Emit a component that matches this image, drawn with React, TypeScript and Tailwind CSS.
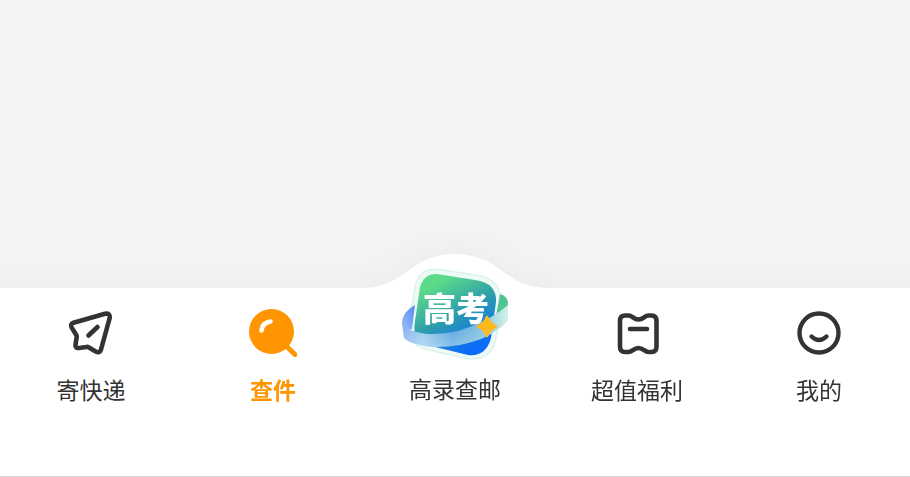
import type { ReactNode } from 'react'

function SendIcon() {
  return (
    <svg viewBox="0 0 48 48" className="size-12" fill="none" stroke="currentColor" strokeWidth="4.6" strokeLinecap="round" strokeLinejoin="round">
      <path d="M6.500 13.800 38 4.800Q43.500 3.800 42.700 9L34 40.500Q32.700 44.500 28.700 42.500L21.500 38.300Q20.500 37.700 19.400 38L12 39Q8 39.500 8.500 35.600L9.700 28.200Q9.900 27 9.300 26L4.700 18.600Q3 15 6.500 13.800Z" />
      <path d="M21.500 26.500 30.500 18" />
    </svg>
  )
}

function SearchIcon() {
  return (
    <svg viewBox="0 0 48 48" className="size-12" fill="none" strokeLinecap="round">
      <path d="M36 36 46 45.500" stroke="currentColor" strokeWidth="5" />
      <circle cx="22.500" cy="22.500" r="22.500" fill="currentColor" />
      <path d="M12.500 21.500Q13.500 13.500 21.500 12.500" stroke="#fff" strokeWidth="4.600" />
    </svg>
  )
}

function TicketIcon() {
  return (
    <svg viewBox="0 0 48 48" className="size-12" fill="none" stroke="currentColor" strokeWidth="4.6" strokeLinecap="round" strokeLinejoin="round">
      <path d="M12 6.500H15.500C19.500 6.500 20.500 10.500 25.500 10.500S31.500 6.500 35.500 6.500H38.500Q43.500 6.500 43.500 12V37.500Q43.500 43 38.500 43H35.500C31.500 43 30.500 39 25.500 39S19.500 43 15.500 43H12Q7 43 7 37.500V12Q7 6.500 12 6.500Z" />
      <path d="M17 20H34" />
    </svg>
  )
}

function SmileIcon() {
  return (
    <svg viewBox="0 0 48 48" className="size-12" fill="none" stroke="currentColor" strokeWidth="4.4" strokeLinecap="round">
      <circle cx="24" cy="24" r="19.500" />
      <path d="M16.500 27.500Q24 34.500 31.500 27.500" />
    </svg>
  )
}

function GaokaoLogo() {
  return (
    <svg viewBox="0 0 112 104" className="h-[104px] w-28" aria-hidden="true">
      <defs>
        <linearGradient id="tile" x1="0.200" y1="0" x2="0.750" y2="1">
          <stop offset="0.120" stopColor="#5cda89" />
          <stop offset="0.500" stopColor="#2d9eab" />
          <stop offset="0.920" stopColor="#0a6cf9" />
        </linearGradient>
        <linearGradient id="band" x1="0" y1="0" x2="1" y2="0">
          <stop offset="0" stopColor="#86b2ef" />
          <stop offset="0.200" stopColor="#9cccf1" />
          <stop offset="0.480" stopColor="#5fa8e0" />
          <stop offset="0.750" stopColor="#84c3e0" />
          <stop offset="1" stopColor="#d5f2e6" />
        </linearGradient>
        <linearGradient id="bandLight" x1="0" y1="0" x2="0" y2="1">
          <stop offset="0.500" stopColor="#fff" stopOpacity="0" />
          <stop offset="1" stopColor="#fff" stopOpacity="0.250" />
        </linearGradient>
        <linearGradient id="bandLeft" x1="0" y1="1" x2="1" y2="0">
          <stop offset="0" stopColor="#9dbff8" />
          <stop offset="1" stopColor="#5388ef" />
        </linearGradient>
      </defs>
      <path
        d="M21 26Q25 13 38 14L78 20Q98 24 97 42L92 80Q87 96 69 94L28 85Q13 80 15 65Z"
        fill="#e7f9f3"
        stroke="#daf4eb"
        strokeWidth="11"
        strokeLinejoin="round"
      />
      <path
        d="M21 26Q25 13 38 14L78 20Q98 24 97 42L92 80Q87 96 69 94L28 85Q13 80 15 65Z"
        fill="none"
        stroke="#edfaf6"
        strokeWidth="8"
      />
      <path d="M16 45Q2 53 3 65L10 70 13 69Z" fill="url(#bandLeft)" />
      <path d="M101 34Q108 36 109 42 110 49 97 56Z" fill="#4fc493" />
      <path d="M21 27Q25 13.500 38 14L76 20Q98 23 97 42L92 78Q87 97 69 95L28 85Q14 80 15.500 65Z" fill="url(#tile)" />
      <path d="M3 63Q8 72 29 74 52 75 73 66 94 58 109 45V61Q98 72 82 79 57 88 35 87 12 85 5 78Z" fill="url(#band)" />
      <path d="M3 63Q8 72 29 74 52 75 73 66 94 58 109 45V61Q98 72 82 79 57 88 35 87 12 85 5 78Z" fill="url(#bandLight)" />
      <text x="57" y="61" textAnchor="middle" fill="#fff" className="font-['Noto_Sans_CJK_SC',sans-serif] text-[33px] font-black">
        高考
      </text>
      <path d="M88 57Q90.500 64 97 66.500 90.500 69 88 76 85.500 69 79 66.500 85.500 64 88 57Z" fill="#ffb91c" stroke="#ffb91c" strokeWidth="2.500" strokeLinejoin="round" />
    </svg>
  )
}

type TabProps = {
  label: string
  icon: ReactNode
  active?: boolean
}

function Tab({ label, icon, active }: TabProps) {
  return (
    <button
      type="button"
      aria-current={active ? 'page' : undefined}
      className={
        active
          ? 'flex flex-1 flex-col items-center gap-3.5 font-bold text-[#ff9500]'
          : 'flex flex-1 flex-col items-center gap-3.5'
      }
    >
      {icon}
      <span>{label}</span>
    </button>
  )
}

export default function App() {
  return (
    <div className="flex min-h-screen flex-col bg-[#f2f3f5] font-['Noto_Sans_CJK_SC',sans-serif] text-[23px] leading-9 text-[#333]">
      <main className="flex-1" />
      <nav className="relative border-b border-[#d4d4d4] bg-white pt-[21px] pb-[69px] drop-shadow-[0_0_14px_rgba(0,0,0,0.04)]">
        {/* raised part of the bar behind the middle tab */}
        <svg
          viewBox="0 0 190 36"
          className="absolute -top-[34px] left-1/2 h-9 w-[190px] -translate-x-1/2 text-white"
          fill="currentColor"
          aria-hidden="true"
        >
          <path d="M0 34C23 34 34 27 48 17 63 5 78 0 95 0S127 5 142 17C156 27 167 34 190 34V36H0Z" />
        </svg>
        <div className="relative flex items-end">
          <Tab label="寄快递" icon={<SendIcon />} />
          <Tab label="查件" icon={<SearchIcon />} active />
          <button type="button" className="-mt-14 flex flex-1 flex-col items-center gap-1.5 pb-px">
            <GaokaoLogo />
            <span>高录查邮</span>
          </button>
          <Tab label="超值福利" icon={<TicketIcon />} />
          <Tab label="我的" icon={<SmileIcon />} />
        </div>
      </nav>
    </div>
  )
}
